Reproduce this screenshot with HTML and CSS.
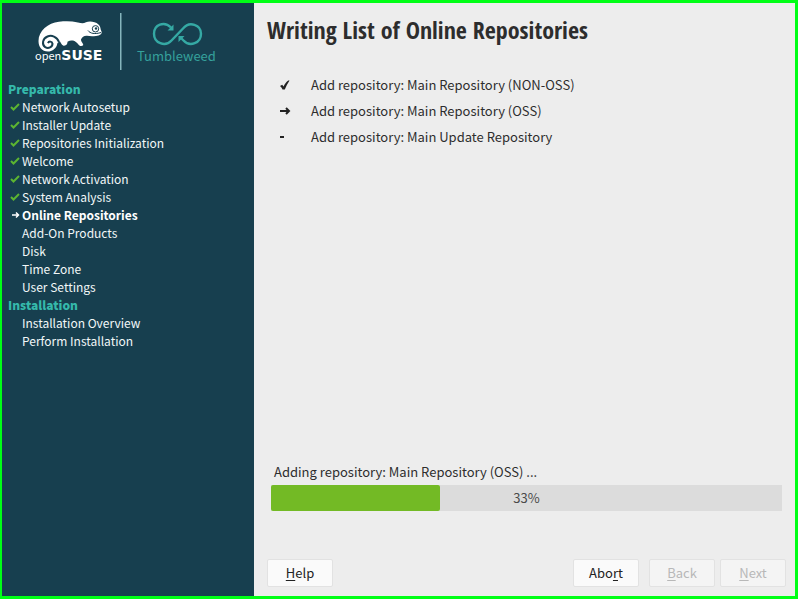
FILE: index.html
```html
<!DOCTYPE html>
<html lang="en">
<head>
<meta charset="utf-8">
<title>Online Repositories</title>
<link rel="stylesheet" href="styles.css">
</head>
<body>
<div class="window">
  <aside class="sidebar">
    <svg class="logo" viewBox="2 3 252 77" role="img" aria-label="openSUSE Tumbleweed">
      <path fill="#fff" d="M38.5 41C38.5 31 48 23 59 21.8C66 21 72 21.2 78 22.5C81 23.2 83 24 86 22.3C89 21 95 21.3 98.500 24.500C100.800 26.500 100.200 29 101.500 31.500C102.200 34 100 35.500 96 36C92 36.500 89.500 36.200 87 35.800C84 35.600 82 37 81 39.500C80.800 41.500 83 43 83.300 45C82 47 79 46 78 44C77 42.500 75 41 73 40.500C70.500 40.500 68.500 41 67.500 41.800C67.500 44 66.500 46 63.500 45.700C61 44.500 61 42.500 60 41.500C58 42 57 43 57 45C55.500 49 52 51.500 48 51.500C42 51.500 38.500 47 38.500 41Z"/>
      <path class="spiral" d="M59 42C57 36.500 51.500 34.800 47.500 36.500C42.500 38.500 41.500 44.500 45.200 47.200C48.500 49 52.500 47 52.500 43.800C52 41 48.800 41 48 43.200"/>
      <path class="mouth" d="M88 30.500C90 33.500 95 34.500 101 32.500"/>
      <circle class="eye" cx="95.500" cy="28.800" r="3.200"/>
      <circle cx="96" cy="28.500" r="1.200" fill="#173f4f"/>
      <text class="brand" x="35" y="60">open<tspan class="brand-bold">SUSE</tspan></text>
      <path fill="#86b6bd" d="M120 13h1.500v57h-1.500z"/>
      <g class="loop">
        <path d="M171 27.500C164 20.500 154 25 154 33.700C154 43 165 47.500 171.500 40.500L183 28.500C189.500 20.500 201 25 201 33.700C201 43 190 47.500 183.500 40.500L181 38"/>
      </g>
      <path fill="#35a9a4" d="M173.500 24.500v6h-6zM178.500 36h6l-6 6z"/>
      <text class="product" x="137" y="61">Tumbleweed</text>
    </svg>
    <nav class="steps">
      <h2>Preparation</h2>
      <ol>
        <li class="done"><svg viewBox="0 0 10 10"><path d="M1 5l2.500 2.500L9 2"/></svg>Network Autosetup</li>
        <li class="done"><svg viewBox="0 0 10 10"><path d="M1 5l2.500 2.500L9 2"/></svg>Installer Update</li>
        <li class="done"><svg viewBox="0 0 10 10"><path d="M1 5l2.500 2.500L9 2"/></svg>Repositories Initialization</li>
        <li class="done"><svg viewBox="0 0 10 10"><path d="M1 5l2.500 2.500L9 2"/></svg>Welcome</li>
        <li class="done"><svg viewBox="0 0 10 10"><path d="M1 5l2.500 2.500L9 2"/></svg>Network Activation</li>
        <li class="done"><svg viewBox="0 0 10 10"><path d="M1 5l2.500 2.500L9 2"/></svg>System Analysis</li>
        <li class="current"><svg viewBox="0 0 10 10"><path d="M2 5h6.500M6 2.500L8.500 5L6 7.500"/></svg>Online Repositories</li>
        <li>Add-On Products</li>
        <li>Disk</li>
        <li>Time Zone</li>
        <li>User Settings</li>
      </ol>
      <h2>Installation</h2>
      <ol>
        <li>Installation Overview</li>
        <li>Perform Installation</li>
      </ol>
    </nav>
  </aside>
  <main class="content">
    <h1>Writing List of Online Repositories</h1>
    <ul class="tasks">
      <li><svg viewBox="0 0 12 12"><path fill="#222" d="M1 7L3.200 5.800L4.500 7.500C5.800 5 7 3 9.200 1.500L10.500 1.500C8.500 4.500 7 7.500 5.800 10.500H3.500C3 9 2 8 1 7Z"/></svg>Add repository: Main Repository (NON-OSS)</li>
      <li><svg viewBox="0 0 12 12"><path class="stroke" d="M1 6h9M7 3l3 3l-3 3"/></svg>Add repository: Main Repository (OSS)</li>
      <li><svg viewBox="0 0 12 12"><path class="stroke" d="M1 6h4"/></svg>Add repository: Main Update Repository</li>
    </ul>
    <div class="status">
      <label for="progress">Adding repository: Main Repository (OSS) ...</label>
      <div class="bar">
        <progress id="progress" max="100" value="33"></progress>
        <span>33%</span>
      </div>
    </div>
    <footer class="actions">
      <button type="button" class="help"><u>H</u>elp</button>
      <button type="button" class="abort">Abo<u>r</u>t</button>
      <button type="button" disabled><u>B</u>ack</button>
      <button type="button" disabled><u>N</u>ext</button>
    </footer>
  </main>
</div>
</body>
</html>
```
FILE: styles.css
```css
* { box-sizing: border-box; }

body {
  margin: 0;
  font: 13px/18px "Noto Sans CJK SC", "Noto Sans", sans-serif;
  color: #2d2d2d;
}

h1, h2, ol, ul { margin: 0; padding: 0; list-style: none; }

.window {
  display: flex;
  min-height: 100vh;
  border: 3px solid #00ff16;
  border-left-width: 2px;
}

.sidebar {
  flex: 0 0 252px;
  background: #173f4f;
  color: #f2f7f8;
}

.logo { display: block; width: 100%; }
.spiral, .mouth, .eye { fill: none; stroke: #173f4f; }
.spiral { stroke-width: 2; }
.brand { font: 11px "Noto Sans CJK SC", sans-serif; fill: #fff; }
.brand-bold { font: 700 14px "DejaVu Sans", sans-serif; }
.loop { fill: none; stroke: #35a9a4; stroke-width: 2.4; }
.product { font: 13px "Noto Sans CJK SC", sans-serif; fill: #35a19c; }

.steps { font-size: 12px; }
.steps h2 {
  padding-left: 6px;
  font-size: 12px;
  line-height: 18px;
  font-weight: 900;
  color: #35b9ab;
}
.steps li {
  display: flex;
  align-items: center;
  padding-left: 20px;
}
.steps svg {
  width: 10px;
  height: 10px;
  margin: 0 2px 0 -12px;
  fill: none;
  stroke: #5cb531;
  stroke-width: 2;
}
.steps .current { font-weight: 700; color: #fff; }
.steps .current svg { stroke: #fff; stroke-width: 1.5; }

.content {
  flex: 1;
  display: flex;
  flex-direction: column;
  padding: 11px 9px 9px 13px;
  background: #ededed;
}

h1 {
  font: 700 24px/32px "Open Sans Condensed", "Noto Sans Condensed", "Fira Sans Condensed", "Roboto Condensed", "Noto Sans CJK SC", sans-serif;
}

.tasks {
  flex: 1;
  padding: 26px 0 0 12px;
}
.tasks li {
  display: flex;
  align-items: center;
  gap: 20px;
  line-height: 26px;
}
.tasks svg { width: 12px; height: 12px; }
.stroke { fill: none; stroke: #222; stroke-width: 2; }

.status { padding: 0 4px 48px; }
.status label { display: block; padding: 0 3px 4px; }
.bar { display: grid; }
.bar > * { grid-area: 1 / 1; }
.bar span { place-self: center; color: #4a4a4a; }

progress {
  width: 100%;
  height: 26px;
  appearance: none;
  border: 0;
  background: #dcdcdc;
}
progress::-webkit-progress-bar { background: #dcdcdc; border-radius: 2px; }
progress::-webkit-progress-value { background: #73ba25; border-radius: 2px; }

.actions { display: flex; gap: 5px; }
button {
  width: 66px;
  height: 28px;
  padding: 0;
  border: 1px solid #e2e2e2;
  border-radius: 2px;
  background: #fafafa;
  font: inherit;
  color: #222;
}
button:disabled { background: #f4f4f4; color: #b8b8b8; }
.help { margin-right: auto; }
.abort { margin-right: 5px; }
u { text-underline-offset: 2px; }
```
